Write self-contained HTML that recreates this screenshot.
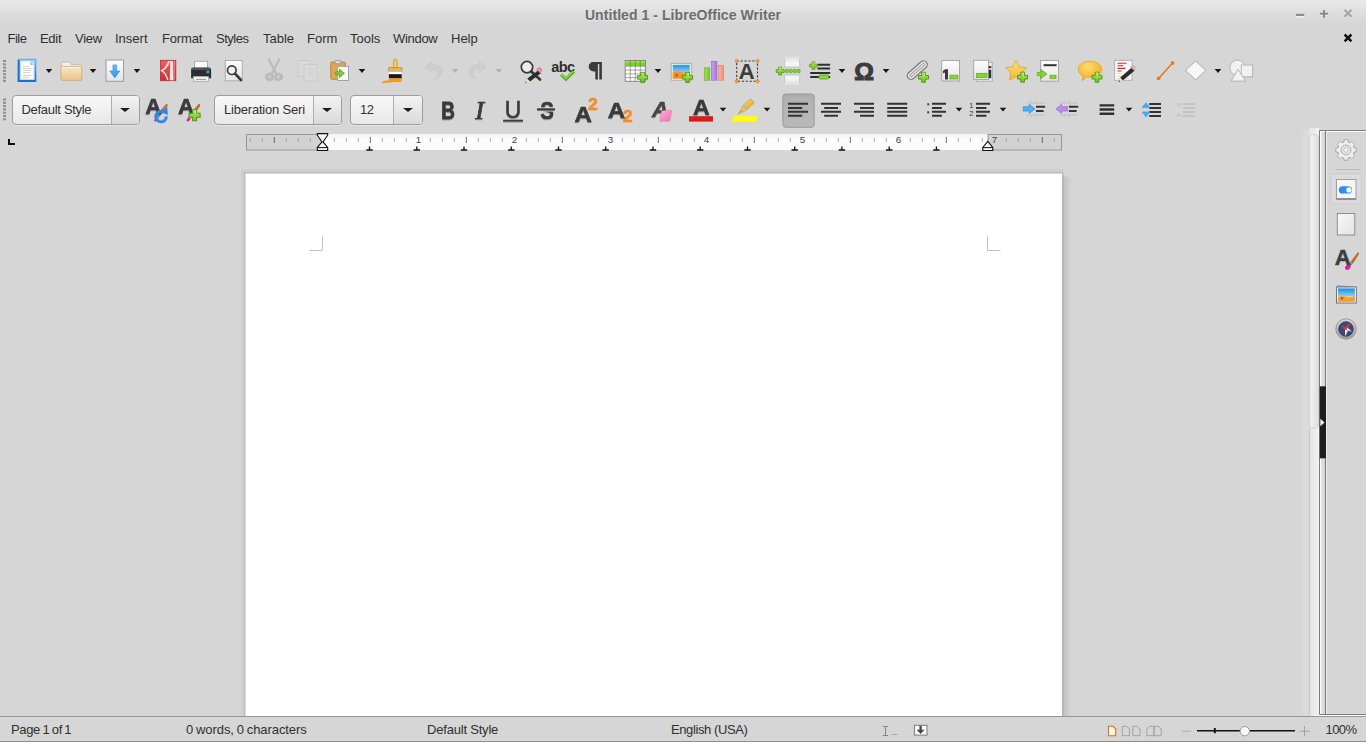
<!DOCTYPE html>
<html lang="en">
<head>
<meta charset="utf-8">
<title>Untitled 1 - LibreOffice Writer</title>
<style>
html,body{margin:0;padding:0;}
body{width:1366px;height:742px;overflow:hidden;background:#d6d6d6;position:relative;
  font-family:"Liberation Sans","DejaVu Sans",sans-serif;font-size:13px;color:#303030;}
.abs{position:absolute;}
.t{position:absolute;white-space:nowrap;line-height:16px;height:16px;}
/* title bar */
#titlebar{position:absolute;left:0;top:0;width:1366px;height:28px;
  background:linear-gradient(#e9e9e9 0,#e5e5e5 5px,#dbdbdb 17px,#d6d6d6 24px);}
#title{text-shadow:0 1px 0 rgba(245,245,245,.7);position:absolute;left:0;width:1366px;top:6px;text-align:center;font-weight:bold;font-size:14px;
  line-height:18px;color:#6c6c6c;letter-spacing:.06px;}
/* menubar */
#menubar{position:absolute;left:0;top:28px;width:1366px;height:22px;}
#menubar span{position:absolute;top:3px;line-height:16px;white-space:nowrap;}
/* toolbars */
.toolbar{position:absolute;left:0;width:1366px;height:40px;}
.toolbar svg{position:absolute;left:0;top:0;}
.combo{position:absolute;top:95px;height:28px;border:1px solid #9d9d9d;border-radius:4px;box-sizing:content-box;
  background:linear-gradient(#f8f8f8,#f1f1f1 45%,#e7e7e7);box-shadow:0 1px 0 #e4e4e4;}
.combo .sep{position:absolute;top:0;bottom:0;width:1px;background:#adadad;}
.combo .btn{position:absolute;top:0;bottom:0;right:0;border-radius:0 3px 3px 0;
  background:linear-gradient(#f4f4f4,#e6e6e6 50%,#dadada);}
.combo .txt{position:absolute;top:6px;line-height:16px;white-space:nowrap;overflow:hidden;color:#303030;}
.combo .arr{position:absolute;top:12px;margin-left:-.6px;width:0;height:0;border-left:5px solid transparent;border-right:5px solid transparent;border-top:4.500px solid #1c1c1c;}
/* document area */
#docarea{position:absolute;left:0;top:130px;width:1308px;height:586px;background:#d6d6d6;overflow:hidden;}
#page{position:absolute;left:246px;top:44px;width:816px;height:560px;background:#fff;}
/* status bar */
#statusbar{position:absolute;left:0;top:716px;width:1366px;height:26px;background:#d6d6d6;border-top:1px solid #959595;border-bottom:1px solid #8e8e8e;box-sizing:border-box;}
#statusbar .t{top:5px;}
</style>
</head>
<body>

<!-- ===== window title bar ===== -->
<div id="titlebar">
  <div id="title">Untitled 1 - LibreOffice Writer</div>
  <svg class="abs" style="left:1286px;top:0" width="80" height="28" viewBox="1286 0 80 28">
    <g fill="none" stroke="#f2f2f2" stroke-width="1.600" opacity=".9">
      <path d="M1296 16.900h8.200"/><path d="M1320 15.300h8M1324 16.500v2"/><path d="M1344.600 10.800l6.800 6.800M1351.400 10.800l-6.800 6.800" opacity=".6"/>
    </g>
    <g fill="none" stroke="#8b8b8b" stroke-width="2.100">
      <path d="M1296 14.900h8.200"/>
      <path d="M1320 13.800h8M1324 9.900v7.800"/>
      <path d="M1344.500 9.700l7 7M1351.500 9.700l-7 7" stroke="#a3a3a3"/>
    </g>
  </svg>
</div>

<!-- ===== menu bar ===== -->
<div id="menubar">
  <span style="left:7.5px;letter-spacing:-.5px">File</span>
  <span style="left:40px;letter-spacing:-.3px">Edit</span>
  <span style="left:75px;letter-spacing:-.25px">View</span>
  <span style="left:115px">Insert</span>
  <span style="left:162px;letter-spacing:-.15px">Format</span>
  <span style="left:216px;letter-spacing:-.5px">Styles</span>
  <span style="left:263px">Table</span>
  <span style="left:307px">Form</span>
  <span style="left:350px">Tools</span>
  <span style="left:393px;letter-spacing:-.3px">Window</span>
  <span style="left:451px">Help</span>
  <svg class="abs" style="left:1338px;top:2px" width="20" height="18" viewBox="1338 30 20 18">
    <path d="M1344.600 34.500l6.800 6.800M1351.400 34.500l-6.800 6.800" stroke="#111" stroke-width="2.500" fill="none"/>
  </svg>
</div>

<!-- ===== standard toolbar ===== -->
<div class="toolbar" id="tb1" style="top:52px">
<svg width="1366" height="40" viewBox="0 52 1366 40">
<defs>
  <linearGradient id="gPlus" x1="0" y1="0" x2="0" y2="1"><stop offset="0" stop-color="#b4e66e"/><stop offset="1" stop-color="#6cc41c"/></linearGradient>
  <g id="plus"><path d="M-1.800-5h3.600v3.200h3.200v3.600h-3.200v3.200h-3.600v-3.200h-3.200v-3.600h3.200z" fill="url(#gPlus)" stroke="#4f9a10" stroke-width="1" stroke-linejoin="round"/><path d="M-1-4.2h2v3.3" fill="none" stroke="#d6f3a6" stroke-width=".8" opacity=".8"/></g>
  <path id="dd" d="M-3.3-1.9h6.6L0 1.9z" fill="#161616"/>
  <g id="grip" fill="#8e8e8e"><rect x="3" y="0" width="3" height="2"/><rect x="3" y="3.3" width="3" height="2"/><rect x="3" y="6.6" width="3" height="2"/><rect x="3" y="9.9" width="3" height="2"/><rect x="3" y="13.2" width="3" height="2"/><rect x="3" y="16.5" width="3" height="2"/><rect x="3" y="19.8" width="3" height="2"/></g>
  <linearGradient id="gBlueV" x1="0" y1="0" x2="0" y2="1"><stop offset="0" stop-color="#6bb3ee"/><stop offset="1" stop-color="#1f6fc4"/></linearGradient>
  <linearGradient id="gFolder" x1="0" y1="0" x2="0" y2="1"><stop offset="0" stop-color="#f9e7c6"/><stop offset="1" stop-color="#e8c38a"/></linearGradient>
  <linearGradient id="gPaper" x1="0" y1="0" x2="0" y2="1"><stop offset="0" stop-color="#fdfdfd"/><stop offset="1" stop-color="#e4e4e4"/></linearGradient>
  <linearGradient id="gRed" x1="0" y1="0" x2="1" y2="1"><stop offset="0" stop-color="#ee5a50"/><stop offset="1" stop-color="#cf2b2b"/></linearGradient>
  <linearGradient id="gArrowB" x1="0" y1="0" x2="0" y2="1"><stop offset="0" stop-color="#6cc0f5"/><stop offset="1" stop-color="#2a8fdd"/></linearGradient>
</defs>
<use href="#grip" y="60"/>
<!-- new document -->
<g>
  <rect x="18.5" y="59.5" width="17" height="21.5" fill="#bcdcf7" stroke="url(#gBlueV)" stroke-width="1.6"/>
  <path d="M18.7 60v21h16.5" fill="none" stroke="#1c6fcc" stroke-width="1.8"/>
  <path d="M21 61.5h9l3.5 3.5v14h-12.5z" fill="#fff"/>
  <path d="M30 61.5v3.5h3.5z" fill="#9cc9f2"/>
  <path d="M23 66.500h6M23 68.500h8M23 70.500h8M23 72.500h7" stroke="#cfcfcf" stroke-width=".9"/>
  <path d="M23 75.500h8M23 77.400h6" stroke="#e8c89a" stroke-width=".9"/>
</g>
<use href="#dd" x="49" y="71"/>
<!-- open folder -->
<g>
  <path d="M61.5 80V63.500q0-1.500 1.500-1.500h5.500q1.200 0 1.800 1.200l.8 1.500H80.500q1 0 1 1V80z" fill="#f3f0ea" stroke="#c9b79a" stroke-width=".9"/>
  <path d="M60.800 66.500h21v13q0 .9-.9.900H61.700q-.9 0-.9-.9z" fill="url(#gFolder)" stroke="#cfae7a" stroke-width=".9"/>
  <path d="M61.500 67.400h19.600" stroke="#fdf6e8" stroke-width=".9"/>
</g>
<use href="#dd" x="93" y="71"/>
<!-- save / download -->
<g>
  <rect x="106" y="60" width="17.500" height="21.300" fill="url(#gPaper)" stroke="#9b9b9b" stroke-width="1"/>
  <path d="M113 65h3.600v6h3.200l-5 6.800-5-6.800h3.200z" fill="url(#gArrowB)" stroke="#3a97e0" stroke-width=".7" stroke-linejoin="round"/>
</g>
<use href="#dd" x="137" y="71"/>
<!-- export pdf -->
<g>
  <defs><linearGradient id="gRed2" x1="0" y1="0" x2="0" y2="1"><stop offset="0" stop-color="#f0625a"/><stop offset="1" stop-color="#d22a38"/></linearGradient></defs>
  <rect x="160.400" y="60.300" width="15.400" height="20.400" fill="url(#gRed2)" stroke="#c4283a" stroke-width=".8"/>
  <path d="M170.300 61h2.700l.5 19.300h-3.800z" fill="#f8eeec" opacity=".96"/>
  <path d="M169.400 61C167.600 66.200 165 69.200 161.600 70.600 164.600 72.200 166.600 75.600 167.800 80" fill="none" stroke="#fbe9e6" stroke-width="1.500" opacity=".95"/>
  <path d="M168 61.500C166.600 65.500 164.800 68 162.600 69.600" fill="none" stroke="#f7b9b2" stroke-width=".7" opacity=".9"/>
  <path d="M174.600 61v19.300" stroke="#f3a9a4" stroke-width=".7" opacity=".7"/>
</g>
<!-- print -->
<g>
  <rect x="194.600" y="61.300" width="13" height="8" fill="#fbfbfb" stroke="#a5a5a5" stroke-width=".9"/>
  <path d="M191.100 78.300v-8.500q0-2.400 2.400-2.400h15.200q2.400 0 2.400 2.400v8.500z" fill="#2b2d2f"/>
  <rect x="192.200" y="68.300" width="17.800" height="1.500" fill="#5d6063"/>
  <rect x="206.400" y="70.600" width="2.900" height="2.700" fill="#2fa3d0"/>
  <rect x="193.500" y="76.600" width="15" height="4.700" fill="#f7f7f7" stroke="#a9a9a9" stroke-width=".9"/>
  <path d="M196 79.400h10" stroke="#8a8a8a" stroke-width=".9"/>
</g>
<!-- print preview -->
<g>
  <rect x="225.300" y="60.500" width="17" height="20.300" fill="url(#gPaper)" stroke="#a6a6a6" stroke-width=".9"/>
  <circle cx="231.800" cy="70.200" r="4.300" fill="#f2f2f2" stroke="#3c3c3c" stroke-width="1.700"/>
  <path d="M235 73.700l6 6.300" stroke="#3a3a3a" stroke-width="2.600" stroke-linecap="round"/>
</g>
<!-- cut (disabled) -->
<g opacity=".6" stroke="#aaaaaa" fill="none">
  <path d="M268.300 58.500l8.200 15.500M279.700 58.500l-8.200 15.500" stroke-width="2.400"/>
  <ellipse cx="269.600" cy="77" rx="3.400" ry="2.800" stroke-width="2.800" fill="#c4c4c4"/>
  <ellipse cx="278.400" cy="77" rx="3.400" ry="2.800" stroke-width="2.800" fill="#c4c4c4"/>
</g>
<!-- copy (disabled) -->
<g opacity=".42" stroke="#bdbdbd" fill="#dcdcdc" stroke-width="1">
  <rect x="298" y="60.500" width="12" height="16"/>
  <rect x="304" y="64.500" width="13" height="16.500" fill="#dedede"/>
  <path d="M307 69h7M307 72h7M307 75h7" stroke="#c4c4c4"/>
</g>
<!-- paste -->
<g>
  <rect x="330.700" y="62" width="14.600" height="17.300" rx="1.200" fill="#dba656" stroke="#b98534" stroke-width=".9"/>
  <path d="M335 63.800v-2.200q0-1.200 1.200-1.200h3.600q1.200 0 1.200 1.200v2.200z" fill="#d9d9d9" stroke="#8f8f8f" stroke-width=".8"/>
  <rect x="337.700" y="66.300" width="10.800" height="14.200" fill="#fafafa" stroke="#9a9a9a" stroke-width=".9"/>
  <path d="M335.600 71.800h4v-2.600l4.800 4.100-4.800 4.100v-2.600h-4z" fill="#7fd03a" stroke="#4f9e18" stroke-width=".8" stroke-linejoin="round"/>
</g>
<use href="#dd" x="362" y="71"/>
<!-- clone formatting brush -->
<g>
  <path d="M393.400 68.200v-6.800q0-2.300 1.900-2.300t1.900 2.300v6.800z" fill="#f3c860" stroke="#c99a2e" stroke-width=".8"/>
  <rect x="388.500" y="67.600" width="13.600" height="4" rx=".8" fill="#e9b651" stroke="#b98930" stroke-width=".8"/>
  <rect x="388.900" y="71.600" width="12.800" height="2.700" fill="#fdfdfd"/>
  <rect x="388.900" y="74.200" width="12.800" height="4.300" fill="#1a1a1a"/>
  <path d="M388.900 78.300h12.800v3.400q-7 .3-10.500 .6t-8.700 .9q-1-.2-.4-1.400 3.500-1.200 6.800-1.500z" fill="#f39a1e"/>
</g>
<!-- undo (disabled) -->
<g opacity=".55">
  <path d="M431.500 61.500l-6.500 5.500 6.500 5.500v-3.500q6.500-.5 6.500 4.500 0 3-3.500 5.500 7.500-2 7.500-8 0-6-10.500-6.500z" fill="#c9c9c9" stroke="#bcbcbc" stroke-width=".8"/>
  <use href="#dd" x="455" y="71" opacity=".35"/>
</g>
<!-- redo (disabled) -->
<g opacity=".55">
  <path d="M479.500 61.500l6.500 5.500-6.500 5.500v-3.500q-6.500-.5-6.500 4.500 0 3 3.500 5.500-7.500-2-7.500-8 0-6 10.500-6.500z" fill="#c9c9c9" stroke="#bcbcbc" stroke-width=".8"/>
  <use href="#dd" x="499" y="71" opacity=".35"/>
</g>
<!-- find & replace -->
<g>
  <circle cx="527" cy="67.100" r="5.700" fill="#ececec" stroke="#3b3b3b" stroke-width="1.700"/>
  <path d="M531.200 71.600l8.800 7.900" stroke="#353535" stroke-width="2.700" stroke-linecap="round"/>
  <path d="M538 70.600l2.800 2.700-10.800 8.300-2.900-2.800z" fill="#2c2c2c"/>
  <path d="M537.400 68.500q1.700-1.800 3.500-.2t.2 3.600l-1 1-3.700-3.400z" fill="#f08cc4" stroke="#c95d99" stroke-width=".5"/>
  <path d="M527.100 78.700l2.900 2.900-4.200 1.300-.7-.6z" fill="#f3e58e"/>
  <path d="M524.900 83.100l.8-1.700 1 .9z" fill="#222"/>
</g>
<!-- spelling -->
<g>
  <text x="551.300" y="72.300" font-family="'Liberation Sans','DejaVu Sans',sans-serif" font-weight="bold" font-size="14.500" letter-spacing="-.6" fill="#303030">abc</text>
  <path d="M561.200 74.600l4.700 4.500 8-7.700" fill="none" stroke="#58b024" stroke-width="3.300"/>
  <path d="M561.600 74.400l4.300 4 7.600-7.300" fill="none" stroke="#86dc48" stroke-width="1.300"/>
</g>
<!-- formatting marks -->
<g>
  <path d="M601.900 61.900H594C590.500 61.900 588.700 64 588.700 66.600C588.700 69.400 590.800 71.400 594 71.400H595.300V79.600H597.900V64H599.300V79.600H601.900z" fill="#3b3b3b"/>
</g>
<!-- insert table -->
<g>
  <rect x="625.200" y="60.500" width="20.300" height="20.800" fill="#fdfdfd" stroke="#7d7d7d" stroke-width=".9"/>
  <rect x="625.700" y="61" width="19.300" height="5" fill="#7ed321"/>
  <rect x="625.700" y="61" width="19.300" height="1.500" fill="#a4e35a"/>
  <path d="M625.500 66.300h20M625.500 70.100h20M625.500 73.900h20M625.500 77.600h20M630.300 61v20M635.300 61v20M640.300 61v20" stroke="#7f7f7f" stroke-width=".7"/>
  <path d="M630.300 61v5M635.300 61v5M640.300 61v5" stroke="#5fae17" stroke-width=".8"/>
  <use href="#plus" x="642.600" y="77.400"/>
</g>
<use href="#dd" x="658" y="71"/>
<!-- insert image -->
<g>
  <defs><linearGradient id="gSky" x1="0" y1="0" x2="0" y2="1"><stop offset="0" stop-color="#2c8fe3"/><stop offset=".48" stop-color="#7ccaf3"/><stop offset=".56" stop-color="#f4d28a"/><stop offset="1" stop-color="#ea8a1c"/></linearGradient></defs>
  <rect x="671.200" y="63.300" width="20" height="16.800" fill="#fcfcfc" stroke="#a3a3a3" stroke-width=".9"/>
  <rect x="672.700" y="64.800" width="17" height="13.800" fill="url(#gSky)"/>
  <path d="M672.700 72.200q4-1.600 8.500-.2t8.500-1v7.600h-17z" fill="#f09424" opacity=".95"/>
  <ellipse cx="676.600" cy="75.300" rx="1.300" ry="1.900" fill="#e2561c"/>
  <use href="#plus" x="687.600" y="77.400"/>
</g>
<!-- insert chart -->
<g>
  <defs>
    <linearGradient id="gBarG" x1="0" y1="0" x2="1" y2="0"><stop offset="0" stop-color="#a6e45c"/><stop offset="1" stop-color="#74c922"/></linearGradient>
    <linearGradient id="gBarP" x1="0" y1="0" x2="1" y2="0"><stop offset="0" stop-color="#c9a0f0"/><stop offset="1" stop-color="#a873e0"/></linearGradient>
    <linearGradient id="gBarS" x1="0" y1="0" x2="1" y2="0"><stop offset="0" stop-color="#f7b7a4"/><stop offset="1" stop-color="#ee8e76"/></linearGradient>
  </defs>
  <rect x="704.300" y="67.800" width="5.400" height="12.400" fill="url(#gBarG)" stroke="#6ab81f" stroke-width=".7"/>
  <rect x="711.500" y="61.300" width="5.400" height="18.900" fill="url(#gBarP)" stroke="#a06bd6" stroke-width=".7"/>
  <rect x="718.600" y="65.300" width="5" height="14.900" fill="url(#gBarS)" stroke="#e3836c" stroke-width=".7"/>
</g>
<!-- insert text box -->
<g>
  <rect x="736.700" y="61" width="20.800" height="20.300" fill="none" stroke="#3a3a3a" stroke-width="1.100" stroke-dasharray="2.200 1.700"/>
  <text x="738.600" y="79" font-family="'Liberation Sans','DejaVu Sans',sans-serif" font-weight="bold" font-size="22.500" fill="#3c3c3c">A</text>
  <g fill="#f79a3a" stroke="#e07b1a" stroke-width=".5"><circle cx="736.700" cy="61" r="1.700"/><circle cx="757.500" cy="61" r="1.700"/><circle cx="736.700" cy="81.300" r="1.700"/><circle cx="757.500" cy="81.300" r="1.700"/></g>
</g>
<!-- insert page break -->
<g>
  <defs>
    <linearGradient id="gPbT" x1="0" y1="0" x2="0" y2="1"><stop offset="0" stop-color="#f6f6f6" stop-opacity=".25"/><stop offset=".6" stop-color="#f6f6f6" stop-opacity=".95"/><stop offset="1" stop-color="#f6f6f6"/></linearGradient>
    <linearGradient id="gPbB" x1="0" y1="1" x2="0" y2="0"><stop offset="0" stop-color="#f6f6f6" stop-opacity=".25"/><stop offset=".6" stop-color="#f6f6f6" stop-opacity=".95"/><stop offset="1" stop-color="#f6f6f6"/></linearGradient>
  </defs>
  <rect x="784.700" y="56.500" width="15" height="10.500" fill="url(#gPbT)"/>
  <rect x="784.700" y="75" width="15" height="10" fill="url(#gPbB)"/>
  <path d="M784.700 58.500v8.500h15v-8.500M784.700 83v-8h15v8" fill="none" stroke="#bdbdbd" stroke-width=".8"/>
  <g fill="#86d836" stroke="#56a318" stroke-width=".7"><rect x="785.500" y="69.400" width="2.900" height="3.200" rx=".8"/><rect x="789.400" y="69.400" width="2.900" height="3.200" rx=".8"/><rect x="793.300" y="69.400" width="2.900" height="3.200" rx=".8"/><path d="M800 69.400h-2q-.8 0-.8 .8v1.600q0 .8 .8 .8h2z"/></g>
  <use href="#plus" x="780.200" y="71" transform="translate(156.040 14.200) scale(.8)"/>
</g>
<!-- insert field -->
<g>
  <path d="M817.500 64.800h12.600M817.500 68.600h12.600M810.200 72.900h20M810.200 77h20" stroke="#2e2e2e" stroke-width="2"/>
  <use href="#plus" x="813.400" y="65.600" transform="translate(203.350 16.400) scale(.75)"/>
  <rect x="819" y="75" width="9.600" height="4" rx="1.200" fill="#8bd63c" stroke="#56a513" stroke-width=".8"/>
</g>
<use href="#dd" x="842" y="71"/>
<!-- special character -->
<text x="854.300" y="80.400" font-family="'Liberation Sans','DejaVu Sans',sans-serif" font-weight="bold" font-size="24.600" fill="#3b3b3b" stroke="#3b3b3b" stroke-width="1.100">Ω</text>
<use href="#dd" x="886" y="71"/>
<!-- hyperlink -->
<g fill="none" transform="rotate(-41.600 917.300 70.100)">
  <rect x="905.300" y="66.400" width="24" height="7.400" rx="3.700" stroke="#848484" stroke-width="1.500"/>
  <rect x="906.600" y="67.700" width="21.400" height="4.800" rx="2.400" stroke="#ededed" stroke-width="1"/>
  <rect x="907.700" y="68.800" width="19.200" height="2.600" rx="1.300" stroke="#9c9c9c" stroke-width=".9"/>
</g>
<use href="#plus" x="923.500" y="77.300"/>
<!-- footnote -->
<g>
  <rect x="941.700" y="60.500" width="17.800" height="20.500" fill="url(#gPaper)" stroke="#a0a0a0" stroke-width=".9"/>
  <path d="M945.200 69.200h2.800v10.200h-3v-6.800l-2.100 .9v-2.500z" fill="#3a3a3a"/>
  <rect x="949.900" y="75.200" width="8" height="3.800" fill="#86d335" stroke="#5aa915" stroke-width=".7"/>
</g>
<!-- endnote -->
<g>
  <rect x="976.200" y="62.200" width="16" height="19" fill="#f0f0f0" stroke="#a8a8a8" stroke-width=".9"/>
  <rect x="973.700" y="60.300" width="15" height="19.200" fill="url(#gPaper)" stroke="#a0a0a0" stroke-width=".9"/>
  <rect x="976.300" y="73.300" width="10.700" height="4.300" fill="#86d335" stroke="#5aa915" stroke-width=".7"/>
  <path d="M988.600 66h2.600v2.200h-2.600zM988.600 69.800h2.600v8.400h-2.600z" fill="#353535"/>
</g>
<!-- bookmark -->
<g>
  <defs><linearGradient id="gStar" x1="0" y1="0" x2="0" y2="1"><stop offset="0" stop-color="#fbe27e"/><stop offset="1" stop-color="#f0b935"/></linearGradient>
  <radialGradient id="gBub" cx=".4" cy=".3" r=".8"><stop offset="0" stop-color="#fcdc6a"/><stop offset="1" stop-color="#f4a820"/></radialGradient></defs>
  <path d="M1016 60.200l3.200 6.600 7.300 1-5.300 5.100 1.300 7.200-6.500-3.500-6.500 3.500 1.300-7.200-5.300-5.100 7.300-1z" fill="url(#gStar)" stroke="#e0a82a" stroke-width=".9" stroke-linejoin="round"/>
  <use href="#plus" x="1022.600" y="77.200"/>
</g>
<!-- cross-reference -->
<g>
  <rect x="1040.600" y="60.500" width="18" height="20.700" fill="url(#gPaper)" stroke="#a0a0a0" stroke-width=".9"/>
  <path d="M1043.600 65.200h13" stroke="#333" stroke-width="2"/>
  <path d="M1037.200 72.400h3.800v-2.800l6 4.400-6 4.400v-2.800h-3.800z" fill="#86d335" stroke="#5aa915" stroke-width=".7" stroke-linejoin="round"/>
  <rect x="1050" y="75.200" width="6" height="3.500" fill="#86d335" stroke="#5aa915" stroke-width=".7"/>
</g>
<!-- comment -->
<g>
  <path d="M1090 61.200c6.500 0 11.500 3.400 11.500 8s-4 7.700-9.800 8q-3.800 .2-5.500 -.4l-3.200 3.600q-.8 .6-.6-.6l.7-3.900q-4.800-2.200-4.800-6.700c0-4.600 5.200-8 11.700-8z" fill="url(#gBub)" stroke="#e2a52a" stroke-width=".9"/>
  <use href="#plus" x="1097" y="77.200"/>
</g>
<!-- track changes -->
<g>
  <rect x="1114.700" y="60.300" width="17.400" height="20" fill="#fafafa" stroke="#a9a9a9" stroke-width=".9"/>
  <path d="M1117.500 63.200h9M1117.500 65.800h6M1117.500 68.400h8M1117.500 71h4" stroke="#e0201c" stroke-width="1.100"/>
  <path d="M1117.500 73.600h3M1117.500 76.200h12M1117.500 78.300h12" stroke="#cfcfcf" stroke-width=".9"/>
  <path d="M1131.700 67.500l3 3-11.900 10-2.700-2.800z" fill="#2b2b2b"/>
  <path d="M1131.500 66.200q1.500-1.400 3 0t.3 3l-.9 1-3.300-3.100z" fill="#eaa8d0" stroke="#c987ae" stroke-width=".5"/>
  <path d="M1120 77.500l3 3-4.400 1.600-.6-.5z" fill="#f1e58e"/>
  <path d="M1118.200 82.200l1.400-1.900.8.900z" fill="#222"/>
</g>
<!-- line -->
<g>
  <path d="M1158.600 78.400l14-15.400" stroke="#e8741c" stroke-width="1.500"/>
  <circle cx="1158.600" cy="78.400" r="1.900" fill="#f07818"/><circle cx="1172.600" cy="63" r="1.900" fill="#f07818"/>
</g>
<!-- basic shapes: diamond -->
<path d="M1195.600 60.800l10.200 9.600-10.200 9.600-10.200-9.600z" fill="#f7f7f7" stroke="#bdbdbd" stroke-width="1.200" stroke-linejoin="round"/>
<use href="#dd" x="1218" y="71"/>
<!-- shapes -->
<g fill="#f1f1f1" stroke="#b4b4b4" stroke-width="1">
  <circle cx="1237.400" cy="67.700" r="7.600"/>
  <rect x="1241.300" y="65" width="11.300" height="11.800"/>
  <path d="M1238 69.300l7.700 11.800h-14.700z"/>
</g>
</svg>
</div>

<!-- ===== formatting toolbar ===== -->
<div class="toolbar" id="tb2" style="top:90px">
<svg width="1366" height="40" viewBox="0 90 1366 40">
<defs>
  <filter id="sh" x="-20%" y="-20%" width="140%" height="150%"><feDropShadow dx="0" dy="1" stdDeviation=".7" flood-color="#000" flood-opacity=".28"/></filter>
  <g id="brush">
    <path d="M9.500 21l1.600-3.300 2.600 1.700-2.200 2.400q-1.400 .600-2-.800z" fill="#e0189c"/>
    <path d="M11.200 17.600l3.200-4 2 1.700-2.600 4z" fill="#8a8a8a"/>
    <path d="M14 13.200l7.500-8.500q1.900-.500 1.700 1.700l-6.800 9z" fill="#b7601a"/>
    <path d="M15.500 13.600l6.500-7.600" stroke="#d98b42" stroke-width=".8" fill="none"/>
  </g>
</defs>
<use href="#grip" y="98.500"/>
<!-- update style -->
<g>
  <use href="#brush" x="144.500" y="99.500"/>
  <text transform="translate(145.200 114.200) scale(1 1)" font-family="'Liberation Sans','DejaVu Sans',sans-serif" font-weight="bold" font-size="22.300" fill="#3b3b3b" stroke="#3b3b3b" stroke-width=".6" filter="url(#sh)">A</text>
  <path d="M166.300 116.500a5.200 5.200 0 1 1-2.800-4.600" fill="none" stroke="#2f86ea" stroke-width="3.200"/>
  <path d="M167.300 107.300l.6 7.600-7-2.600z" fill="#2f86ea"/>
  <path d="M165.300 118a4.400 4.400 0 0 1-7.800.3" fill="none" stroke="#7db8f6" stroke-width="1" opacity=".8"/>
</g>
<!-- new style -->
<g>
  <use href="#brush" x="177" y="99.500"/>
  <text transform="translate(178 114.200) scale(1 1)" font-family="'Liberation Sans','DejaVu Sans',sans-serif" font-weight="bold" font-size="22.300" fill="#3b3b3b" stroke="#3b3b3b" stroke-width=".6" filter="url(#sh)">A</text>
  <use href="#plus" x="194.600" y="115.300" transform="translate(-19.460 -11.530) scale(1.100)"/>
</g>
<!-- bold / italic / underline / strikethrough -->
<g fill="#3a3a3a" filter="url(#sh)">
  <text transform="translate(441.200 118.500) scale(.81 1)" font-family="'Liberation Sans','DejaVu Sans',sans-serif" font-weight="bold" font-size="23.300" stroke="#3a3a3a" stroke-width=".8">B</text>
  <text transform="translate(475.300 118.500) scale(1.050 1)" font-family="'Liberation Serif','DejaVu Serif',serif" font-style="italic" font-size="25" stroke="#3a3a3a" stroke-width=".7">I</text>
  <text transform="translate(504.700 117.700) scale(.98 1)" font-family="'Liberation Sans','DejaVu Sans',sans-serif" font-size="23.300" stroke="#3a3a3a" stroke-width=".5">U</text>
  <rect x="503.200" y="119.700" width="19.800" height="1.900"/>
  <text transform="translate(540.200 118.800) scale(.84 1)" font-family="'Liberation Sans','DejaVu Sans',sans-serif" font-weight="bold" font-size="24.300" stroke="#3a3a3a" stroke-width=".6">S</text>
</g>
<rect x="536.800" y="107.300" width="18.400" height="4.300" fill="#d6d6d6" opacity=".9"/>
<rect x="537" y="108.300" width="18" height="2.300" fill="#3a3a3a"/>
<!-- superscript / subscript -->
<g>
  <text transform="translate(574.600 121.800) scale(1.08 1)" font-family="'Liberation Sans','DejaVu Sans',sans-serif" font-weight="bold" font-size="22.300" fill="#3b3b3b" stroke="#3b3b3b" stroke-width=".6" filter="url(#sh)">A</text>
  <text x="588.200" y="110.300" font-family="'Liberation Sans','DejaVu Sans',sans-serif" font-weight="bold" font-size="17.300" fill="#f7941d" stroke="#e57e0c" stroke-width=".5">2</text>
  <text transform="translate(607.800 117.900) scale(1.08 1)" font-family="'Liberation Sans','DejaVu Sans',sans-serif" font-weight="bold" font-size="22.300" fill="#3b3b3b" stroke="#3b3b3b" stroke-width=".6" filter="url(#sh)">A</text>
  <text x="623" y="121.600" font-family="'Liberation Sans','DejaVu Sans',sans-serif" font-weight="bold" font-size="17.300" fill="#f7941d" stroke="#e57e0c" stroke-width=".5">2</text>
</g>
<!-- clear direct formatting -->
<g>
  <defs><linearGradient id="gPink" x1="0" y1="0" x2="1" y2="1"><stop offset="0" stop-color="#f9b3d6"/><stop offset="1" stop-color="#ef6fb0"/></linearGradient></defs>
  <text transform="translate(652 117.200) scale(1 1)" font-family="'Liberation Sans','DejaVu Sans',sans-serif" font-weight="bold" font-style="italic" font-size="22.800" fill="#454545" stroke="#454545" stroke-width=".5" filter="url(#sh)">A</text>
  <path d="M662.600 110.800l8.600-.6q.9 0 .7 .9l-2 9.200q-.2 .9-1.200 .9l-8.200 .3q-1 0-.8-.9l1.800-8.800q.2-.9 1.100-1z" fill="url(#gPink)" stroke="#ea79b4" stroke-width=".5"/>
</g>
<!-- font colour -->
<g>
  <text transform="translate(693 114.600) scale(1.07 1)" font-family="'Liberation Sans','DejaVu Sans',sans-serif" font-weight="bold" font-size="21.600" fill="#3b3b3b" stroke="#3b3b3b" stroke-width=".6" filter="url(#sh)">A</text>
  <rect x="689" y="116.200" width="24" height="5.400" fill="#d61c1c"/>
</g>
<use href="#dd" x="723" y="109.700"/>
<!-- highlighting -->
<g>
  <defs><linearGradient id="gMark" x1="0" y1="0" x2="1" y2="1"><stop offset="0" stop-color="#f6d768"/><stop offset="1" stop-color="#d9a526"/></linearGradient></defs>
  <path d="M743.200 105.200l6.600-5.800q1-.6 1.800 .2l2 2.300q.6 .9-.2 1.700l-6.600 6.200z" fill="url(#gMark)" stroke="#c9992a" stroke-width=".6"/>
  <path d="M743.200 105.400l3.500 4.200-3.200 2.500-2.700-3z" fill="#e3c766" stroke="#8f93a8" stroke-width=".5"/>
  <path d="M740.800 109.200l2.500 2.800-6.200 2.700z" fill="#d4a932"/>
  <rect x="732.600" y="116.200" width="24.400" height="5.400" fill="#ffff00"/>
</g>
<use href="#dd" x="767" y="109.700"/>
<!-- align left (active) -->
<defs><linearGradient id="gPressed" x1="0" y1="0" x2="0" y2="1"><stop offset="0" stop-color="#a9a9a9"/><stop offset=".15" stop-color="#b1b1b1"/><stop offset="1" stop-color="#b9b9b9"/></linearGradient></defs>
<rect x="782.900" y="94" width="31.300" height="33.300" rx="3" fill="url(#gPressed)" stroke="#9a9a9a" stroke-width="1"/>
<g stroke="#333" stroke-width="2">
  <path d="M788 103.800h20M788 107.900h14.200M788 111.800h20M788 115.800h14.200"/>
  <!-- center -->
  <path d="M821 103.800h20M824.200 107.900h13.800M821 111.800h20M824.200 115.800h13.800"/>
  <!-- right -->
  <path d="M854 103.800h20M860 107.900h14M854 111.800h20M860 115.800h14"/>
  <!-- justify -->
  <path d="M887.200 103.800h20M887.200 107.900h20M887.200 111.800h20M887.200 115.800h20"/>
  <!-- bullets -->
  <path d="M932 103.800h14M932 107.900h9.800M932 111.800h14M932 115.800h9.800"/>
  <!-- numbering -->
  <path d="M976 103.800h14M976 107.900h10.400M976 111.800h14M976 115.800h10.400"/>
</g>
<g fill="#444"><rect x="927.200" y="103.300" width="2" height="2"/><rect x="927.200" y="111.300" width="2" height="2"/></g>
<use href="#dd" x="959" y="109.700"/>
<text x="969.300" y="107.600" font-family="'Liberation Sans','DejaVu Sans',sans-serif" font-size="7.500" fill="#333">1</text>
<text x="969.300" y="116.300" font-family="'Liberation Sans','DejaVu Sans',sans-serif" font-size="7.500" fill="#333">2</text>
<use href="#dd" x="1003" y="109.700"/>
<!-- increase indent -->
<g>
  <path d="M1027 103h18M1027 115h18" stroke="#b9b9b9" stroke-width=".8"/>
  <path d="M1031.500 100.500v2M1031.500 115.500v2M1036.500 100.500v2M1036.500 115.500v2" stroke="#bdbdbd" stroke-width=".8"/>
  <path d="M1036 106.700h9.200M1036 111h7.600" stroke="#333" stroke-width="2"/>
  <path d="M1023.200 106.700h6v-2.400l5.800 4.600-5.800 4.600v-2.400h-6z" fill="#52aef0" stroke="#2f8fdc" stroke-width=".7" stroke-linejoin="round"/>
</g>
<!-- decrease indent -->
<g>
  <path d="M1060 103h18M1060 115h18" stroke="#b9b9b9" stroke-width=".8"/>
  <path d="M1064.500 100.500v2M1064.500 115.500v2M1069.500 100.500v2M1069.500 115.500v2" stroke="#bdbdbd" stroke-width=".8"/>
  <path d="M1069 106.700h9.200M1069 111h7.600" stroke="#333" stroke-width="2"/>
  <path d="M1067.600 106.700h-6v-2.400l-5.800 4.600 5.800 4.600v-2.400h6z" fill="#b78de8" stroke="#9a6dd4" stroke-width=".7" stroke-linejoin="round"/>
</g>
<!-- line spacing -->
<path d="M1099.600 105.400h14.600M1099.600 109.500h14.600M1099.600 113.700h14.600" stroke="#303030" stroke-width="2.400"/>
<use href="#dd" x="1129" y="109.700"/>
<!-- increase paragraph spacing -->
<g>
  <path d="M1149.200 104h11.800M1149.200 108h11.800M1149.200 112h11.800M1149.200 116h11.800" stroke="#333" stroke-width="2"/>
  <path d="M1146 102.800l3.800 4.800h-7.600zM1146 116.800l3.800-4.800h-7.600z" fill="#4facea" stroke="#2f90dc" stroke-width=".6" stroke-linejoin="round"/>
</g>
<!-- decrease paragraph spacing (disabled) -->
<g opacity=".55">
  <path d="M1183 104h12M1183 108h12M1183 112h12M1183 116h12" stroke="#b4b4b4" stroke-width="2"/>
  <path d="M1179 107.600l3.400-4.400h-6.800zM1179 112.200l3.400 4.400h-6.800z" fill="#c0c0c0"/>
</g>
</svg>
</div>
<div class="combo" style="left:12px;width:126px">
  <div class="btn" style="width:28px"></div><div class="sep" style="left:98px"></div>
  <div class="txt" style="left:8.500px;width:86px;letter-spacing:-.3px">Default Style</div>
  <div class="arr" style="left:108px"></div>
</div>
<div class="combo" style="left:214px;width:126px">
  <div class="btn" style="width:28px"></div><div class="sep" style="left:98px"></div>
  <div class="txt" style="left:9px;width:81px;letter-spacing:-.2px">Liberation Serif</div>
  <div class="arr" style="left:108px"></div>
</div>
<div class="combo" style="left:350px;width:71px">
  <div class="btn" style="width:28px"></div><div class="sep" style="left:42.400px"></div>
  <div class="txt" style="left:9px;width:30px;letter-spacing:-.5px">12</div>
  <div class="arr" style="left:53px"></div>
</div>

<!-- ===== document area ===== -->
<div id="docarea">
  <div id="page"></div>
  <svg class="abs" style="left:0;top:0" width="1308" height="586" viewBox="0 130 1308 586">
<!-- page border + shadow -->
<defs><linearGradient id="gShR" x1="0" y1="0" x2="1" y2="0"><stop offset="0" stop-color="#000" stop-opacity=".1"/><stop offset="1" stop-color="#000" stop-opacity="0"/></linearGradient></defs>
<rect x="241.200" y="169.300" width="823" height="560" fill="#c9c9c9" opacity=".5"/>
<rect x="242.400" y="170.500" width="821.600" height="560" fill="#c9c9c9" opacity=".45"/>
<rect x="1063" y="176.500" width="8.500" height="560" fill="url(#gShR)"/>
<rect x="244.300" y="172.400" width="818.800" height="560" fill="#b4b4b4"/>
<rect x="245.400" y="173.500" width="816.600" height="560" fill="#fff"/>
<!-- horizontal ruler -->
<defs><linearGradient id="gRul" x1="0" y1="0" x2="0" y2="1"><stop offset="0" stop-color="#f3f3f3"/><stop offset=".35" stop-color="#fdfdfd"/><stop offset="1" stop-color="#fafafa"/></linearGradient></defs>
<rect x="246.500" y="134" width="815" height="16" fill="url(#gRul)"/>
<rect x="246.500" y="134.500" width="75.800" height="15.500" fill="#d2d2d2" stroke="#979797" stroke-width="1"/>
<rect x="988" y="134.500" width="73.500" height="15.500" fill="#d2d2d2" stroke="#979797" stroke-width="1"/>
<path d="M250.3 138.2v3.800M262.3 138.2v3.800M286.3 138.2v3.800M298.3 138.2v3.800M310.3 138.2v3.800M334.3 138.2v3.800M346.3 138.2v3.800M358.3 138.2v3.800M382.3 138.2v3.800M394.3 138.2v3.800M406.3 138.2v3.800M430.3 138.2v3.800M442.3 138.2v3.800M454.3 138.2v3.800M478.3 138.2v3.800M490.3 138.2v3.800M502.3 138.2v3.800M526.3 138.2v3.800M538.3 138.2v3.800M550.3 138.2v3.800M574.3 138.2v3.800M586.3 138.2v3.800M598.3 138.2v3.800M622.3 138.2v3.800M634.3 138.2v3.800M646.3 138.2v3.800M670.3 138.2v3.800M682.3 138.2v3.800M694.3 138.2v3.800M718.3 138.2v3.800M730.3 138.2v3.800M742.3 138.2v3.800M766.3 138.2v3.800M778.3 138.2v3.800M790.3 138.2v3.800M814.3 138.2v3.800M826.3 138.2v3.800M838.3 138.2v3.800M862.3 138.2v3.800M874.3 138.2v3.800M886.3 138.2v3.800M910.3 138.2v3.800M922.3 138.2v3.800M934.3 138.2v3.800M958.3 138.2v3.800M970.3 138.2v3.800M982.3 138.2v3.800M1006.3 138.2v3.800M1018.3 138.2v3.800M1030.3 138.2v3.800M1054.3 138.2v3.800" stroke="#a9a9a9" stroke-width="1" fill="none"/>
<path d="M274.3 136.800v6.200M370.3 136.800v6.200M466.3 136.800v6.200M562.3 136.800v6.200M658.3 136.800v6.200M754.3 136.800v6.200M850.3 136.800v6.200M946.3 136.800v6.200M1042.3 136.800v6.200" stroke="#6a6a6a" stroke-width="1" fill="none"/>
<text x="418.6" y="143.300" text-anchor="middle" font-family="'Liberation Sans','DejaVu Sans',sans-serif" font-size="9.800" fill="#3c424c">1</text>
<text x="514.6" y="143.300" text-anchor="middle" font-family="'Liberation Sans','DejaVu Sans',sans-serif" font-size="9.800" fill="#3c424c">2</text>
<text x="610.6" y="143.300" text-anchor="middle" font-family="'Liberation Sans','DejaVu Sans',sans-serif" font-size="9.800" fill="#3c424c">3</text>
<text x="706.6" y="143.300" text-anchor="middle" font-family="'Liberation Sans','DejaVu Sans',sans-serif" font-size="9.800" fill="#3c424c">4</text>
<text x="802.6" y="143.300" text-anchor="middle" font-family="'Liberation Sans','DejaVu Sans',sans-serif" font-size="9.800" fill="#3c424c">5</text>
<text x="898.6" y="143.300" text-anchor="middle" font-family="'Liberation Sans','DejaVu Sans',sans-serif" font-size="9.800" fill="#3c424c">6</text>
<text x="994.6" y="143.300" text-anchor="middle" font-family="'Liberation Sans','DejaVu Sans',sans-serif" font-size="9.800" fill="#3c424c">7</text>
<path d="M369.5 146.600v3.200M366.3 150h6.400M416.8 146.600v3.200M413.6 150h6.400M464 146.600v3.200M460.8 150h6.400M511.3 146.600v3.200M508.1 150h6.400M558.5 146.600v3.200M555.3 150h6.400M605.7 146.600v3.200M602.5 150h6.400M653 146.600v3.200M649.8 150h6.400M700.2 146.600v3.200M697 150h6.400M747.5 146.600v3.200M744.3 150h6.400M794.7 146.600v3.200M791.5 150h6.400M841.9 146.600v3.200M838.7 150h6.400M889.2 146.600v3.200M886 150h6.400M936.4 146.600v3.200M933.2 150h6.400" stroke="#111" stroke-width="1.300" fill="none"/>
<path d="M317.300 133.600h10.400v1.600l-4.700 6.700 4.700 5.600v3h-10.400v-3l4.700-5.600-4.700-6.700z" fill="#f4f4f4" stroke="#111" stroke-width="1.100" stroke-linejoin="miter"/>
<path d="M317.300 147.600h10.400" stroke="#111" stroke-width="1"/>
<path d="M987.800 141.300l5 6.200v3h-10v-3z" fill="#f4f4f4" stroke="#111" stroke-width="1.100"/>
<path d="M982.800 147.600h10" stroke="#111" stroke-width="1"/>
<path d="M9 139V144H15" stroke="#0c0c0c" stroke-width="2" fill="none"/>
<path d="M309.500 250.500h13v-14M1000.500 250.500h-13v-14" stroke="#c2c2c2" stroke-width="1" fill="none"/>
  </svg>
</div>

<!-- ===== right side: scrollbar + sidebar ===== -->
<svg class="abs" style="left:1300px;top:126px" width="66" height="590" viewBox="1300 126 66 590">
<defs>
  <linearGradient id="gTrack" x1="0" y1="0" x2="1" y2="0"><stop offset="0" stop-color="#e3e3e3"/><stop offset="1" stop-color="#f3f3f3"/></linearGradient>
  <linearGradient id="gThumb" x1="0" y1="0" x2="1" y2="0"><stop offset="0" stop-color="#e3e3e3"/><stop offset=".22" stop-color="#f0f0f0"/><stop offset="1" stop-color="#dbdbdb"/></linearGradient>
  <linearGradient id="gSplit" x1="0" y1="0" x2="1" y2="0"><stop offset="0" stop-color="#fafafa"/><stop offset=".3" stop-color="#e4e4e4"/><stop offset="1" stop-color="#cfcfcf"/></linearGradient>
</defs>
<!-- vertical scrollbar -->
<rect x="1304" y="130" width="5.500" height="586" fill="#dbdbdb"/>
<rect x="1302.500" y="130" width="1.500" height="586" fill="#d9d9d9"/>
<rect x="1309" y="128" width="10.300" height="588" fill="url(#gTrack)"/>
<path d="M1309.400 428V716" stroke="#c3c3c3" stroke-width="1"/>
<rect x="1309.200" y="134.300" width="9.900" height="294" rx="4.900" fill="url(#gThumb)" stroke="#c8c8c8" stroke-width=".7"/>
<!-- sidebar splitter -->
<rect x="1319.500" y="130.500" width="6" height="584" fill="url(#gSplit)"/>
<path d="M1366 130.500H1319.500V714.500H1366" fill="none" stroke="#7d7d7d" stroke-width="1"/>
<path d="M1366 131.500H1320.500V714" fill="none" stroke="#fbfbfb" stroke-width="1"/>
<path d="M1319 715.500H1366" stroke="#fafafa" stroke-width="1"/>
<path d="M1325.500 714.500V131" stroke="#7d7d7d" stroke-width="1"/>
<path d="M1326.500 714V132.500" stroke="#ececec" stroke-width="1"/>
<rect x="1319.800" y="386.300" width="6.200" height="72" fill="#1f1f1f"/>
<path d="M1320.300 418.700l4.200 3.800-4.200 3.800z" fill="#f4f4f4"/>
<!-- sidebar: settings gear -->
<g>
  <path d="M1343.8 142.1L1343.9 139.8L1348.1 139.8L1348.2 142.1L1350.0 142.8L1351.7 141.3L1354.7 144.3L1353.2 146.0L1353.9 147.8L1356.2 147.9L1356.2 152.1L1353.9 152.2L1353.2 154.0L1354.7 155.7L1351.7 158.7L1350.0 157.2L1348.2 157.9L1348.1 160.2L1343.9 160.2L1343.8 157.9L1342.0 157.2L1340.3 158.7L1337.3 155.7L1338.8 154.0L1338.1 152.2L1335.8 152.1L1335.8 147.9L1338.1 147.8L1338.8 146.0L1337.3 144.3L1340.3 141.3L1342.0 142.8z" fill="#efefef" stroke="#a9a9a9" stroke-width="1" stroke-linejoin="round"/>
  <circle cx="1346" cy="150" r="5" fill="#e4e4e4" stroke="#b0b0b0" stroke-width="1"/>
  <circle cx="1346" cy="150" r="2.300" fill="#f4f4f4" stroke="#b9b9b9" stroke-width=".8"/>
</g>
<path d="M1335.700 169.500h24.300" stroke="#bcbcbc" stroke-width="1"/>
<!-- sidebar: properties (selected) -->
<rect x="1330.800" y="174" width="30.500" height="30" rx="2" fill="#dbdbdb" stroke="#cbcbcb" stroke-width="1"/>
<rect x="1336.500" y="179.500" width="19.500" height="19.500" fill="#f6f6f6" stroke="#a0a0a0" stroke-width="1"/>
<path d="M1336.500 199h19.500" stroke="#707070" stroke-width="1.200"/>
<rect x="1338.800" y="186.200" width="13.200" height="7.400" rx="3.700" fill="#2f8df0"/>
<circle cx="1348.900" cy="189.900" r="2.600" fill="#fafafa"/>
<!-- sidebar: page -->
<defs><linearGradient id="gPg" x1="0" y1="0" x2="1" y2="1"><stop offset="0" stop-color="#f8f8f8"/><stop offset="1" stop-color="#e3e3e3"/></linearGradient></defs>
<rect x="1337.300" y="213.500" width="17.500" height="21.500" fill="url(#gPg)" stroke="#8d8d8d" stroke-width="1"/>
<!-- sidebar: styles -->
<g>
  <path d="M1350.600 261.800l7-9.200q1.600-.5 1.500 1.200l-6.200 9.700z" fill="#b7601a"/>
  <path d="M1351.600 261.600l6.200-8.200" stroke="#d98b42" stroke-width=".7" fill="none"/>
  <path d="M1348.300 264.600l2.300-3 2.300 1.700-2.300 3z" fill="#8f8f8f"/>
  <path d="M1346.500 265.300l1.800-1 2.400 1.800q.2 2.600-1.900 3.500t-3.500-.6q-.9-1.400 .2-2.600z" fill="#e0189c"/>
  <text transform="translate(1334.700 265.200) scale(1.020 1)" font-family="'Liberation Sans','DejaVu Sans',sans-serif" font-weight="bold" font-size="21.800" fill="#3d3d3d" stroke="#3d3d3d" stroke-width=".5">A</text>
</g>
<!-- sidebar: gallery -->
<g>
  <defs><linearGradient id="gSky2" x1="0" y1="0" x2="0" y2="1"><stop offset="0" stop-color="#2387e0"/><stop offset=".55" stop-color="#7fcdf4"/><stop offset=".62" stop-color="#f5d590"/><stop offset="1" stop-color="#ea8a1c"/></linearGradient></defs>
  <path d="M1337.700 285.700l17.500 1.500-1 14.500-17.500-1z" fill="#7fc0f2" stroke="#6a8db3" stroke-width=".7"/>
  <rect x="1336.500" y="287" width="19.800" height="16" fill="#fdfdfd" stroke="#5b6673" stroke-width=".9"/>
  <rect x="1337.900" y="288.400" width="17" height="13.200" fill="url(#gSky2)"/>
  <path d="M1337.900 296.800q4-1.600 8.500-.2t8.500-.9v5.900h-17z" fill="#f0a030" opacity=".9"/>
  <circle cx="1342" cy="298.300" r="1.400" fill="#e2471c"/>
</g>
<!-- sidebar: navigator -->
<g>
  <defs><linearGradient id="gRing" x1="0" y1="0" x2="0" y2="1"><stop offset="0" stop-color="#d9d9d9"/><stop offset="1" stop-color="#9c9c9c"/></linearGradient></defs>
  <circle cx="1346" cy="329" r="10.200" fill="url(#gRing)" stroke="#8c8c8c" stroke-width=".8"/>
  <circle cx="1346" cy="329" r="7.300" fill="#3b4a7a" stroke="#2d375c" stroke-width=".8"/>
  <path d="M1350.500 322.300l-3 7.800-3-2z" fill="#e8332e"/>
  <path d="M1341 325.500l5.300 2.300-1.400 2.400z" fill="#e8332e"/>
  <path d="M1345.300 336.200l-.4-6.700 3 1.600z" fill="#f4f4f4"/>
  <path d="M1351.800 331.400l-5.600-1.200 1.400-2.400z" fill="#f4f4f4"/>
</g>
</svg>

<!-- ===== status bar ===== -->
<div id="statusbar">
  <span class="t" style="left:11px;letter-spacing:-.35px;word-spacing:-.8px">Page 1 of 1</span>
  <span class="t" style="left:186px;letter-spacing:-.07px;word-spacing:-.7px">0 words, 0 characters</span>
  <span class="t" style="left:427px;letter-spacing:-.2px">Default Style</span>
  <span class="t" style="left:671px;letter-spacing:-.4px">English (USA)</span>
  <span class="t" style="left:1325.500px;letter-spacing:-.6px">100%</span>
  <svg class="abs" style="left:860px;top:0" width="506" height="26" viewBox="860 716 506 26">
<!-- insert mode -->
<path d="M885.500 725.300v9.400M882.800 725.500h5.400M882.800 734.500h5.400" stroke="#858585" stroke-width="1" fill="none"/>
<path d="M891.200 733.500h6.300" stroke="#a9a9a9" stroke-width="1"/>
<!-- selection mode -->
<rect x="914.400" y="724.300" width="12.600" height="9.800" fill="#fbfbfb" stroke="#7a7a7a" stroke-width="1"/>
<path d="M919.400 724.800h2.400v4h2.800l-4 4.300-4-4.300h2.800z" fill="#4a4a4a"/>
<!-- view layout -->
<path d="M1108.500 725.300h4.500l2.700 2.700v6.700h-7.200z" fill="#fdf4ea" stroke="#d9731e" stroke-width="1.100"/>
<g fill="none" stroke="#a2a2a2" stroke-width="1">
  <path d="M1122.300 725.300h4.500l2.700 2.700v6.700h-7.200z"/>
  <path d="M1132.800 725.300h4.500l2.700 2.700v6.700h-7.200z"/>
  <path d="M1154 725.300h-4.500l-2.700 2.700v6.700h7.200zM1154 725.300h4.500l2.700 2.700v6.700h-7.200z"/>
</g>
<!-- zoom slider -->
<path d="M1182 730.200h9" stroke="#adadad" stroke-width="1"/>
<path d="M1197 729.700h98" stroke="#111" stroke-width="1.500"/>
<path d="M1214.800 727v5.200" stroke="#111" stroke-width="2"/>
<circle cx="1244.800" cy="730.200" r="4.700" fill="#fbfbfb" stroke="#9a9a9a" stroke-width="1"/>
<path d="M1299.500 730.200h10M1304.500 725.200v10" stroke="#a3a3a3" stroke-width="1"/>
  </svg>
</div>

</body>
</html>
